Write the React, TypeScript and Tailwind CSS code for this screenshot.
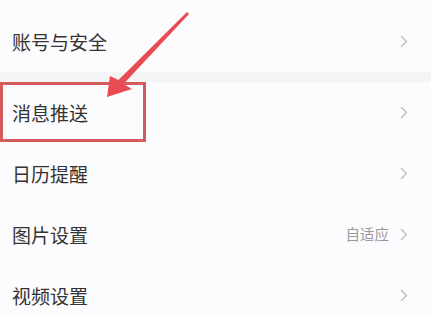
import React from "react";

const Chevron = () => (
  <svg width="10" height="13" viewBox="0 0 10 13" className="shrink-0">
    <path d="M2.5 1.5 L7.5 6.5 L2.5 11.5" fill="none" stroke="#c2c2c4" strokeWidth="1.5" strokeLinecap="round" strokeLinejoin="round" />
  </svg>
);

const Row = ({ label, value, boxed }: { label: string; value?: string; boxed?: boolean }) => (
  <div className="relative flex h-[61px] items-center pl-[12px] pr-[22px]">
    {boxed && (
      <div className="absolute left-0 top-0 h-[60px] w-[146px] border-[3px] border-[#d55a5c]" />
    )}
    <span className="flex-1 text-[19px] leading-none text-[#333333]">{label}</span>
    {value && <span className="mr-[10px] text-[14.5px] leading-none text-[#9a9a9c]">{value}</span>}
    <Chevron />
  </div>
);

export default function App() {
  return (
    <div
      className="relative h-[315px] w-[431px] overflow-hidden bg-[#fcfbfd]"
      style={{ fontFamily: '"Noto Sans CJK SC", "Noto Sans", sans-serif' }}
    >
      <div className="pt-[11px]">
        <Row label="账号与安全" />
        <div className="h-[10px] bg-[#f4f3f5]" />
        <Row label="消息推送" boxed />
        <Row label="日历提醒" />
        <Row label="图片设置" value="自适应" />
        <Row label="视频设置" />
      </div>
      <svg className="pointer-events-none absolute left-0 top-0" width="431" height="315" viewBox="0 0 431 315">
        <polygon
          points="187,12 189,14 123.5,84 132,89 107,97 110,76 118.5,80"
          fill="#e94b52"
        />
      </svg>
    </div>
  );
}
